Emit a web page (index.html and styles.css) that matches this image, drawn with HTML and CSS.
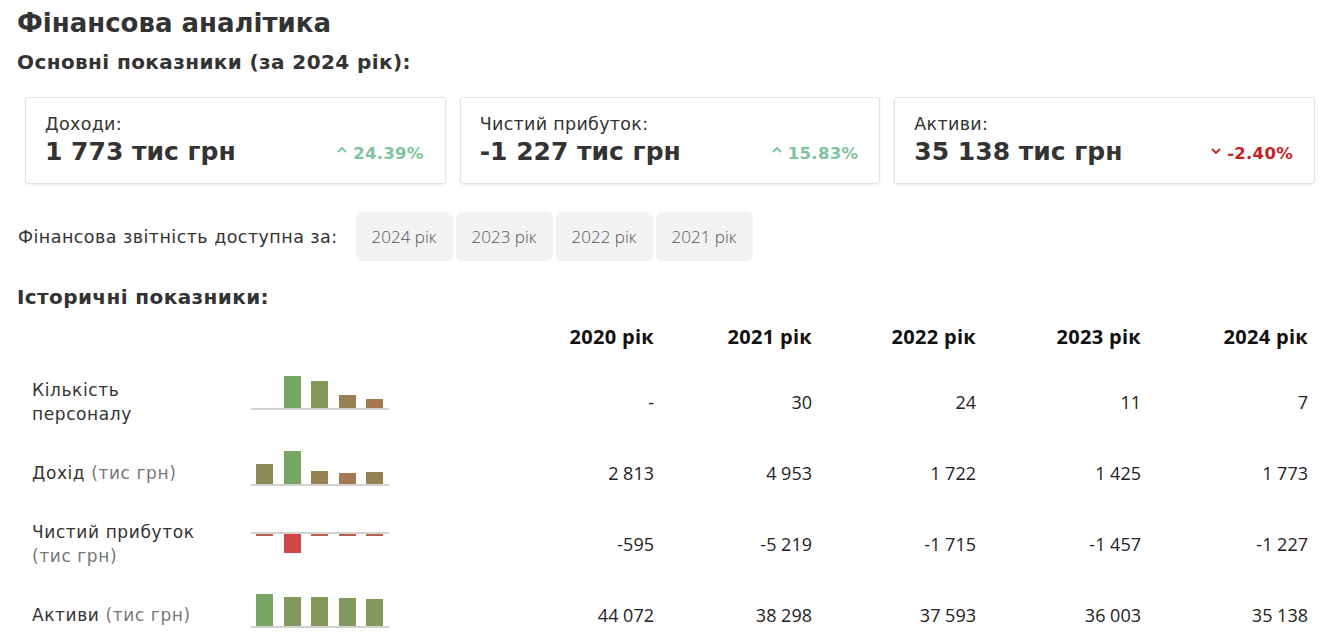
FILE: index.html
```html
<!DOCTYPE html>
<html lang="uk">
<head>
<meta charset="utf-8">
<title>Фінансова аналітика</title>
<link rel="stylesheet" href="styles.css">
</head>
<body>
<div class="page">
  <h1 class="title">Фінансова аналітика</h1>
  <h2 class="subtitle">Основні показники (за 2024 рік):</h2>

  <div class="cards">
    <div class="card">
      <div class="card-label">Доходи:</div>
      <div class="card-row">
        <div class="card-value">1 773 тис грн</div>
        <div class="pct up"><svg class="chev" viewBox="0 0 10 6" width="10" height="6"><path d="M1 5 L5 1 L9 5" fill="none" stroke="currentColor" stroke-width="1.8"/></svg>24.39%</div>
      </div>
    </div>
    <div class="card">
      <div class="card-label">Чистий прибуток:</div>
      <div class="card-row">
        <div class="card-value">-1 227 тис грн</div>
        <div class="pct up"><svg class="chev" viewBox="0 0 10 6" width="10" height="6"><path d="M1 5 L5 1 L9 5" fill="none" stroke="currentColor" stroke-width="1.8"/></svg>15.83%</div>
      </div>
    </div>
    <div class="card">
      <div class="card-label">Активи:</div>
      <div class="card-row">
        <div class="card-value">35 138 тис грн</div>
        <div class="pct down"><svg class="chev" viewBox="0 0 10 6" width="10" height="6"><path d="M1 1 L5 5 L9 1" fill="none" stroke="currentColor" stroke-width="1.8"/></svg>-2.40%</div>
      </div>
    </div>
  </div>

  <div class="reports">
    <span class="reports-label">Фінансова звітність доступна за:</span>
    <span class="year-btn">2024 рік</span>
    <span class="year-btn">2023 рік</span>
    <span class="year-btn">2022 рік</span>
    <span class="year-btn">2021 рік</span>
  </div>

  <h2 class="subtitle hist">Історичні показники:</h2>

  <div class="table">
    <div class="th"></div><div class="th"></div>
    <div class="th num">2020 рік</div>
    <div class="th num">2021 рік</div>
    <div class="th num">2022 рік</div>
    <div class="th num">2023 рік</div>
    <div class="th num">2024 рік</div>

    <div class="td label"><p class="label-text">Кількість персоналу</p></div>
    <div class="td spark">
      <div class="bars r1">
        <span class="bar" style="height:0px"></span>
        <span class="bar c1" style="height:32px"></span>
        <span class="bar c2" style="height:27px"></span>
        <span class="bar c3" style="height:13px"></span>
        <span class="bar c4" style="height:9px"></span>
      </div>
    </div>
    <div class="td num">-</div>
    <div class="td num">30</div>
    <div class="td num">24</div>
    <div class="td num">11</div>
    <div class="td num">7</div>

    <div class="td label"><p class="label-text">Дохід <span class="unit">(тис грн)</span></p></div>
    <div class="td spark">
      <div class="bars r2">
        <span class="bar c2b" style="height:20px"></span>
        <span class="bar c1" style="height:33px"></span>
        <span class="bar c3" style="height:13px"></span>
        <span class="bar c4" style="height:11px"></span>
        <span class="bar c3" style="height:12px"></span>
      </div>
    </div>
    <div class="td num">2 813</div>
    <div class="td num">4 953</div>
    <div class="td num">1 722</div>
    <div class="td num">1 425</div>
    <div class="td num">1 773</div>

    <div class="td label"><p class="label-text">Чистий прибуток <span class="unit">(тис грн)</span></p></div>
    <div class="td spark">
      <div class="bars neg">
        <span class="bar small" style="height:2px"></span>
        <span class="bar red" style="height:19px"></span>
        <span class="bar small" style="height:2px"></span>
        <span class="bar small" style="height:2px"></span>
        <span class="bar small" style="height:2px"></span>
      </div>
    </div>
    <div class="td num">-595</div>
    <div class="td num">-5 219</div>
    <div class="td num">-1 715</div>
    <div class="td num">-1 457</div>
    <div class="td num">-1 227</div>

    <div class="td label"><p class="label-text">Активи <span class="unit">(тис грн)</span></p></div>
    <div class="td spark">
      <div class="bars r2">
        <span class="bar c1" style="height:32px"></span>
        <span class="bar c2" style="height:29px"></span>
        <span class="bar c2" style="height:29px"></span>
        <span class="bar c2" style="height:28px"></span>
        <span class="bar c2" style="height:27px"></span>
      </div>
    </div>
    <div class="td num">44 072</div>
    <div class="td num">38 298</div>
    <div class="td num">37 593</div>
    <div class="td num">36 003</div>
    <div class="td num">35 138</div>
  </div>
</div>
</body>
</html>
```

FILE: styles.css
```css
* { box-sizing: border-box; }
body {
  margin: 0;
  background: #fff;
  font-family: "DejaVu Sans", "Open Sans", sans-serif;
  color: #2b2b2b;
}
.page {
  padding: 4px 17px 0 17px;
}
.title {
  margin: 0;
  font-size: 26px;
  font-weight: 700;
  line-height: 38px;
  color: #333;
}
.subtitle {
  margin: 6px 0 0 0;
  font-size: 20px;
  font-weight: 700;
  line-height: 28px;
  color: #333;
  letter-spacing: 0.4px;
}
.cards {
  display: flex;
  gap: 14px;
  margin: 21px 5px 0 8px;
}
.card {
  flex: 1;
  height: 87px;
  border: 1px solid #e2e2e2;
  border-radius: 3px;
  box-shadow: 0 1px 3px rgba(0,0,0,0.08);
  padding: 13px 21px 0 19px;
}
.card-label {
  font-size: 17.5px;
  letter-spacing: 0.3px;
  line-height: 26px;
  color: #333;
}
.card-row {
  display: flex;
  justify-content: space-between;
  align-items: center;
}
.card-value {
  font-size: 25px;
  font-weight: 700;
  line-height: 30px;
  color: #333;
}
.pct {
  display: flex;
  align-items: center;
  gap: 6px;
  font-size: 16.5px;
  letter-spacing: 0.3px;
  font-weight: 700;
  padding-top: 2px;
}
.pct.up { color: #7dc49d; }
.pct.down { color: #c81f1f; }
.chev { display: block; }
.pct.up .chev { margin-top: -6px; }
.pct.down .chev { margin-top: -4px; }

.reports {
  display: flex;
  align-items: center;
  gap: 3px;
  margin-top: 28px;
}
.reports-label {
  font-size: 17.5px;
  letter-spacing: 0.45px;
  color: #333;
  margin-right: 15px;
  padding-left: 1px;
}
.year-btn {
  display: inline-flex;
  align-items: center;
  justify-content: center;
  height: 49px;
  padding: 0 16px;
  background: #f2f2f2;
  border-radius: 6px;
  font-family: "Open Sans", sans-serif;
  font-size: 17px;
  font-weight: 300;
  color: #555;
}

.hist { margin-top: 22px; }

.table {
  display: grid;
  grid-template-columns: 219px 138px 265px 158px 164px 165px 167px;
  margin-left: 15px;
  margin-top: 13px;
}
.th {
  font-family: "Open Sans", sans-serif;
  font-size: 20px;
  font-weight: 700;
  letter-spacing: 0.3px;
  color: #111;
  line-height: 26px;
  height: 42px;
}
.num { text-align: right; }
.td {
  height: 71px;
  display: flex;
  align-items: center;
  font-family: "Open Sans", sans-serif;
  font-size: 18px;
  color: #222;
}
.td.num { justify-content: flex-end; }
.td.label {
  font-family: "DejaVu Sans", sans-serif;
  font-size: 17px;
  line-height: 24px;
  letter-spacing: 0.6px;
  color: #333;
}
.label-text {
  margin: 0;
  width: 180px;
}
.unit { color: #777; }
.spark {
  align-items: center;
}
.bars {
  width: 138px;
  height: 34px;
  display: flex;
  align-items: flex-end;
  gap: 10.5px;
  padding-left: 5px;
  border-bottom: 2px solid #d3d3d3;
}
.bars.r1 { margin-bottom: 18px; }
.bars.r2 { margin-bottom: 8px; }
.bars.neg {
  margin-top: 10px;
  align-items: flex-start;
  border-bottom: none;
  border-top: 2px solid #d3d3d3;
}
.bar {
  display: block;
  width: 17px;
  background: #77a763;
}
.bar.c1 { background: #77a763; }
.bar.c2 { background: #839a5e; }
.bar.c2b { background: #8d8a58; }
.bar.c3 { background: #958153; }
.bar.c4 { background: #a27951; }
.bar.red { background: #d04545; }
.bar.small { background: #b5604c; }
```
